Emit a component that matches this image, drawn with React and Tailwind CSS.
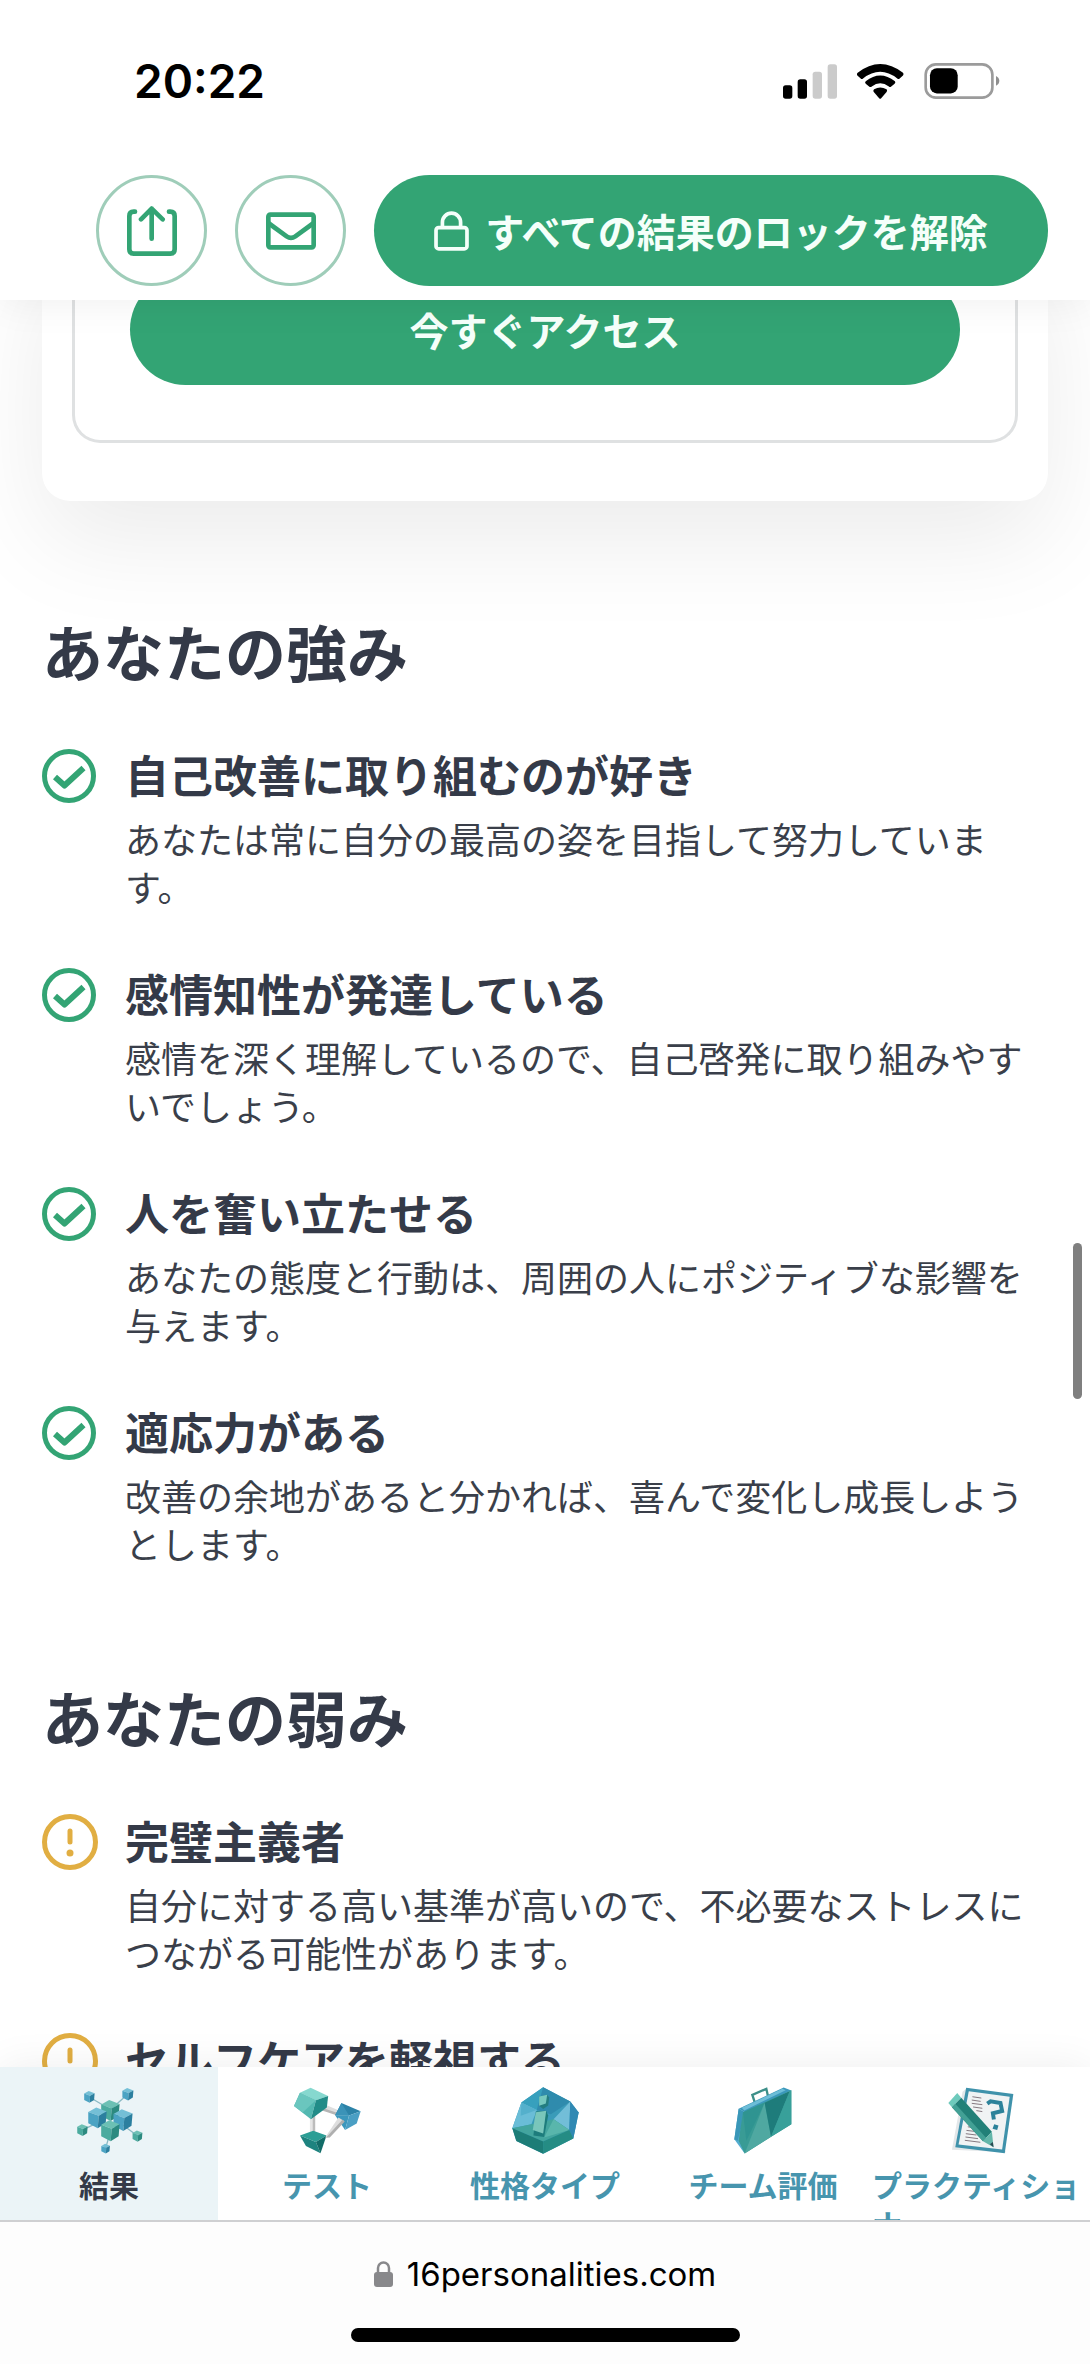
import React from "react";

const JP = "font-['Noto_Sans_CJK_JP','Noto_Sans',sans-serif]";

const strengths = [
  { title: "自己改善に取り組むのが好き", text: "あなたは常に自分の最高の姿を目指して努力しています。" },
  { title: "感情知性が発達している", text: "感情を深く理解しているので、自己啓発に取り組みやすいでしょう。" },
  { title: "人を奮い立たせる", text: "あなたの態度と行動は、周囲の人にポジティブな影響を与えます。" },
  { title: "適応力がある", text: "改善の余地があると分かれば、喜んで変化し成長しようとします。" },
];

const weaknesses = [
  { title: "完璧主義者", text: "自分に対する高い基準が高いので、不必要なストレスにつながる可能性があります。" },
  { title: "セルフケアを軽視する", text: "" },
];

function SignalIcon() {
  return (
    <svg width="54" height="35" viewBox="0 0 162 103" aria-hidden="true">
      <rect x="0" y="63" width="28" height="40" rx="8" />
      <rect x="44" y="45" width="28" height="58" rx="8" />
      <rect x="89" y="22" width="28" height="81" rx="8" fill="#cbcbcb" />
      <rect x="134" y="0" width="28" height="103" rx="8" fill="#cbcbcb" />
    </svg>
  );
}

function WifiIcon() {
  return (
    <svg width="47" height="35" viewBox="290 71 140 104" aria-hidden="true">
      <path d="M292 97 Q359 45 427 97 Q430 101 427 105 L417 114 Q414 117 410 114 Q359 74 308 114 Q304 117 301 114 L291 105 Q288 101 292 97Z" />
      <path d="M316 122 Q359 88 403 122 Q406 126 402 130 L392 138 Q388 141 385 138 Q359 119 334 138 Q330 141 326 138 L316 130 Q312 126 316 122Z" />
      <path d="M341 146 Q359 135 378 146 Q381 150 378 154 L362 173 Q359 176 356 173 L340 154 Q337 150 341 146Z" />
    </svg>
  );
}

function BatteryIcon() {
  return (
    <svg width="76" height="36" viewBox="490 68 228 109" aria-hidden="true">
      <rect x="494" y="72" width="202" height="101" rx="31" fill="none" stroke="#9b9b9b" strokeWidth="8" />
      <rect x="507" y="84" width="84" height="76" rx="21" />
      <path d="M707 107 Q717 112 717 122 Q717 132 707 137Z" fill="#8f8f8f" />
    </svg>
  );
}

function ShareIcon() {
  return (
    <svg width="50" height="50" viewBox="0 0 150 150" fill="none" stroke="#33a474" strokeWidth="14" strokeLinecap="round" strokeLinejoin="round" aria-hidden="true">
      <path d="M24 17H20Q7 17 7 30V130Q7 143 20 143H130Q143 143 143 130V30Q143 17 130 17H126" />
      <path d="M74 98V8M42 40L74 8L107 40" />
    </svg>
  );
}

function MailIcon() {
  return (
    <svg width="50" height="38" viewBox="0 0 150 112" fill="none" stroke="#33a474" strokeWidth="14" strokeLinejoin="round" aria-hidden="true">
      <rect x="7" y="7" width="136" height="98" rx="6" />
      <path d="M7 32L62 72Q75 81 88 72L143 32" />
    </svg>
  );
}

function LockOutlineIcon() {
  return (
    <svg width="35" height="40" viewBox="0 0 104 118" fill="none" stroke="currentColor" strokeWidth="11" aria-hidden="true">
      <rect x="6" y="49" width="92" height="63" rx="8" />
      <path d="M25 48V33a27 27 0 0 1 54 0V48" />
    </svg>
  );
}

function CheckIcon() {
  return (
    <svg width="56" height="56" viewBox="0 -1 56 56" fill="none" stroke="#33a474" strokeWidth="5" aria-hidden="true">
      <circle cx="27" cy="27" r="24.500" />
      <path d="M13 28L22.500 36.500L41.500 19" strokeWidth="6" strokeLinejoin="round" />
    </svg>
  );
}

function AlertIcon() {
  return (
    <svg width="56" height="56" viewBox="0 0 56 56" fill="none" stroke="#e1ae42" strokeWidth="5" strokeLinecap="round" aria-hidden="true">
      <circle cx="28" cy="28" r="25.500" />
      <path d="M28 17V28" />
      <circle cx="28" cy="39" r="3.500" fill="#e1ae42" stroke="none" />
    </svg>
  );
}

function Cube({ x, y, r, tone }) {
  const c = tone === "blue" ? ["#74bfd6", "#4ba3c3", "#2b7f9f"] : ["#6cc0b4", "#4bab9f", "#2c8a80"];
  const p = (pts) => pts.map(([a, b]) => `${x + a * r},${y + b * r}`).join(" ");
  return (
    <g>
      <polygon fill={c[0]} points={p([[-0.9, -0.6], [-0.1, -1.05], [0.95, -0.65], [0.15, -0.2]])} />
      <polygon fill={c[1]} points={p([[-0.9, -0.6], [0.15, -0.2], [0.05, 1.05], [-0.9, 0.55]])} />
      <polygon fill={c[2]} points={p([[0.15, -0.2], [0.95, -0.65], [0.85, 0.55], [0.05, 1.05]])} />
    </g>
  );
}

function ResultsIcon() {
  return (
    <svg className="shrink-0" width="67" height="67" viewBox="46 47 202 202" aria-hidden="true">
      <g stroke="#8ab9c4" strokeWidth="4">
        <path d="M86 77L150 115M202 69L150 115M65 177L110 155M231 194L185 160M135 233L150 180" />
      </g>
      <Cube x={86} y={77} r={17} tone="blue" />
      <Cube x={202} y={69} r={18} tone="blue" />
      <Cube x={65} y={177} r={17} tone="teal" />
      <Cube x={231} y={195} r={16} tone="teal" />
      <Cube x={135} y={233} r={14} tone="blue" />
      <Cube x={149} y={118} r={30} tone="teal" />
      <Cube x={110} y={140} r={30} tone="blue" />
      <Cube x={187} y={147} r={31} tone="blue" />
      <Cube x={149} y={179} r={30} tone="teal" />
    </svg>
  );
}

function TestIcon() {
  return (
    <svg className="shrink-0" width="67" height="67" viewBox="42 49 202 200" aria-hidden="true">
      <polygon points="90,135 98,135 98,195 90,190" fill="#e6e6e6" />
      <polygon points="98,135 106,130 106,195 98,195" fill="#bcbcbc" />
      <polygon points="128,98 176,118 170,132 122,115" fill="#dedede" />
      <polygon points="124,110 172,126 170,133 122,117" fill="#b5b5b5" />
      <polygon points="60,65 92,50 145,75 108,88" fill="#86d8cf" />
      <polygon points="60,65 108,88 93,145 42,105" fill="#53b8b1" />
      <polygon points="60,65 108,88 68,125 42,105" fill="#6ac6be" />
      <polygon points="108,88 145,75 141,110 93,145" fill="#228c88" />
      <polygon points="60,194 100,180 140,194 108,214" fill="#2c9e95" />
      <polygon points="60,194 108,214 122,248 78,226" fill="#1e837f" />
      <polygon points="108,214 140,194 122,248" fill="#126c68" />
      <polygon points="185,96 243,121 208,134 166,133" fill="#2c83a8" />
      <polygon points="185,96 208,134 166,133" fill="#3b93b8" />
      <polygon points="166,133 208,134 196,178" fill="#3b97bc" />
      <polygon points="208,134 243,121 231,158 196,178" fill="#4a9fc4" />
      <polygon points="176,140 192,150 148,198 136,200" fill="#dedede" />
      <polygon points="188,147 195,152 150,200 138,201" fill="#afafaf" />
    </svg>
  );
}

function TypesIcon() {
  return (
    <svg className="shrink-0" width="67" height="67" viewBox="34 49 200 200" aria-hidden="true">
      <polygon points="127,50 208,92 233,125 217,203 127,248 47,210 35,172 62,95" fill="#3a9bb9" />
      <polygon points="127,50 62,95 108,118" fill="#37a0bd" />
      <polygon points="127,50 208,92 150,130 108,118" fill="#2f8bad" />
      <polygon points="62,95 108,118 92,160 35,172" fill="#6abdd7" />
      <polygon points="62,95 108,118 60,135" fill="#54b0cc" />
      <polygon points="208,92 205,177 158,145" fill="#72bed8" />
      <polygon points="208,92 233,125 217,203 205,177" fill="#3089b3" />
      <polygon points="35,172 92,160 158,145 205,177 127,212" fill="#43a59e" />
      <polygon points="158,145 205,177 130,200" fill="#59b6ac" />
      <polygon points="35,172 127,212 127,248 47,210" fill="#1d7d77" />
      <polygon points="127,212 205,177 217,203 127,248" fill="#258c84" />
      <polygon points="115,77 139,72 145,80 142,104 127,115 115,105" fill="#237d80" />
      <polygon points="115,77 139,72 135,98 115,105" fill="#76c8be" />
      <polygon points="105,122 136,120 142,134 130,198 98,194" fill="#1d7c7c" />
      <polygon points="105,124 136,120 127,188 96,177" fill="#79c6bb" />
    </svg>
  );
}

function TeamIcon() {
  return (
    <svg className="shrink-0" width="58" height="67" viewBox="701 49 174 200" aria-hidden="true">
      <path d="M765 100L756 72L798 54L803 76" fill="none" stroke="#3d8f89" strokeWidth="7" />
      <polygon points="715,114 850,50 873,59 735,125" fill="#3b98bb" />
      <polygon points="724,111 846,54 856,58 732,119" fill="#6dbdd7" />
      <polygon points="715,114 735,125 733,248 702,205" fill="#53acd0" />
      <polygon points="715,114 735,125 712,210 702,205" fill="#3a97b8" />
      <polygon points="728,124 873,58 873,160 733,248 715,210" fill="#399b95" />
      <polygon points="728,124 793,96 738,210" fill="#2f9491" />
      <polygon points="793,96 812,198 733,248" fill="#4fa8a1" />
      <polygon points="793,96 868,61 812,198" fill="#1e7c7b" />
      <polygon points="868,61 873,58 873,160 812,198" fill="#38a09a" />
    </svg>
  );
}

function PractitionerIcon() {
  return (
    <svg className="shrink-0" width="66" height="67" viewBox="54 49 200 200" aria-hidden="true">
      <polygon points="98,62 110,52 230,245 66,238" fill="#e3e7e9" />
      <polygon points="109,50 252,69 226,248 76,230" fill="#3f92ab" />
      <polygon points="117,60 241,77 218,237 86,222" fill="#f0f3f4" />
      <path d="M128 77L155 81M126 87L153 91M126 97L158 101M130 108L158 112M140 119L158 122M114 168L125 170M110 179L135 182M108 189L140 193M107 199L145 204M105 209L152 215" stroke="#84777f" strokeWidth="3" />
      <path d="M173 98L183 91L213 96L218 120L190 127L193 146" fill="none" stroke="#2c829a" strokeWidth="12" />
      <polygon points="194,160 207,164 203,178 189,174" fill="#2c829a" />
      <polygon points="55,96 82,66 94,80 66,109" fill="#6ecabc" />
      <polygon points="66,109 94,80 187,183 160,212" fill="#228078" />
      <polygon points="66,109 76,98 170,202 160,212" fill="#42a095" />
      <polygon points="160,212 187,183 192,230" fill="#64b6aa" />
      <polygon points="181,221 190,214 192,230" fill="#294a52" />
    </svg>
  );
}

const tabs = [
  { label: "結果", Icon: ResultsIcon, active: true },
  { label: "テスト", Icon: TestIcon },
  { label: "性格タイプ", Icon: TypesIcon },
  { label: "チーム評価", Icon: TeamIcon },
  { label: "プラクティショナー", Icon: PractitionerIcon },
];

function TraitSection({ heading, items, Icon }) {
  return (
    <section className="mt-[110px]">
      <h2 className="mb-[52px] text-[61px] leading-[80px] font-bold text-[#343a48]">{heading}</h2>
      <ul className="flex flex-col gap-[52px]">
        {items.map((item) => (
          <li key={item.title} className="flex gap-[27px]">
            <div className="flex h-[66px] shrink-0 items-center">
              <Icon />
            </div>
            <div>
              <h3 className="text-[44px] leading-[62px] font-bold text-[#343a48]">{item.title}</h3>
              <p className="mt-[9px] text-[36px] leading-[48px] text-[#3a3f4a]">{item.text}</p>
            </div>
          </li>
        ))}
      </ul>
    </section>
  );
}

export default function App() {
  return (
    <div className={`relative flex h-screen flex-col overflow-hidden bg-white ${JP}`}>
      <header className="relative z-10 shrink-0 bg-white pt-[53px] pb-3.5 shadow-[0_0_40px_rgba(0,0,0,0.07)]">
        <div className="flex h-14 items-center justify-between pr-[90px] pl-[134px] text-black">
          <time className="font-['Inter',sans-serif] text-[46px] leading-[56px] font-semibold">20:22</time>
          <div className="flex items-center gap-5">
            <SignalIcon />
            <WifiIcon />
            <BatteryIcon />
          </div>
        </div>
        <div className="mt-[66px] flex gap-7 pr-[42px] pl-24">
          <button type="button" aria-label="共有" className="flex size-[111px] items-center justify-center rounded-full border-3 border-[#9fcdb9]">
            <ShareIcon />
          </button>
          <button type="button" aria-label="メール" className="flex size-[111px] items-center justify-center rounded-full border-3 border-[#9fcdb9]">
            <MailIcon />
          </button>
          <button type="button" className="flex h-[111px] flex-1 items-center justify-center gap-4 rounded-full bg-[#33a474] text-[39px] font-bold whitespace-nowrap text-[#f5fffa]">
            <LockOutlineIcon />
            すべての結果のロックを解除
          </button>
        </div>
      </header>

      <main className="min-h-0 flex-1 overflow-hidden">
        <div className="-mt-[60px] px-[42px]">
          <div className="rounded-[28px] bg-white px-[30px] pb-[58px] shadow-[0_40px_100px_rgba(0,0,0,0.08)]">
            <div className="rounded-b-[28px] border-3 border-t-0 border-[#dfe1e2] px-[55px] pt-[34px] pb-[55px]">
              <button type="button" className="block h-[111px] w-full rounded-full bg-[#33a474] text-[39px] font-bold text-[#f5fffa]">
                今すぐアクセス
              </button>
            </div>
          </div>
          <TraitSection heading="あなたの強み" items={strengths} Icon={CheckIcon} />
          <TraitSection heading="あなたの弱み" items={weaknesses} Icon={AlertIcon} />
        </div>
      </main>

      <nav className="relative z-10 grid h-[153px] shrink-0 grid-cols-5 bg-white shadow-[0_0_40px_rgba(0,0,0,0.07)]">
        {tabs.map(({ label, Icon, active }) => (
          <a
            key={label}
            href="#"
            aria-current={active ? "page" : undefined}
            className={`flex min-w-0 flex-col items-center gap-[11px] overflow-hidden pt-5 text-[30px] leading-[39px] font-bold ${
              active ? "bg-[#ebf4f7] text-[#343a48]" : "text-[#4795ae]"
            }`}
          >
            <Icon />
            <span>{label}</span>
          </a>
        ))}
      </nav>

      <footer className="relative z-10 flex shrink-0 flex-col items-center border-t-2 border-[#cfd0d2] bg-[#fdfdfd] pt-[30px] pb-[22px]">
        <div className="flex items-center gap-3.5 font-['Inter',sans-serif] text-[33px] leading-[44px] text-black">
          <svg width="19" height="26" viewBox="0 0 19 26" aria-hidden="true">
            <rect x="0" y="11" width="19" height="15" rx="3" fill="#88888b" />
            <path d="M4 12V7a5.500 5.500 0 0 1 11 0V12" fill="none" stroke="#88888b" strokeWidth="2.500" />
          </svg>
          <span>16personalities.com</span>
        </div>
        <div className="mt-8 h-3.5 w-[389px] rounded-full bg-black" />
      </footer>

      <div className="absolute top-[1243px] right-2 z-20 h-[156px] w-[9px] rounded-full bg-[#7f7f7f]" />
    </div>
  );
}
